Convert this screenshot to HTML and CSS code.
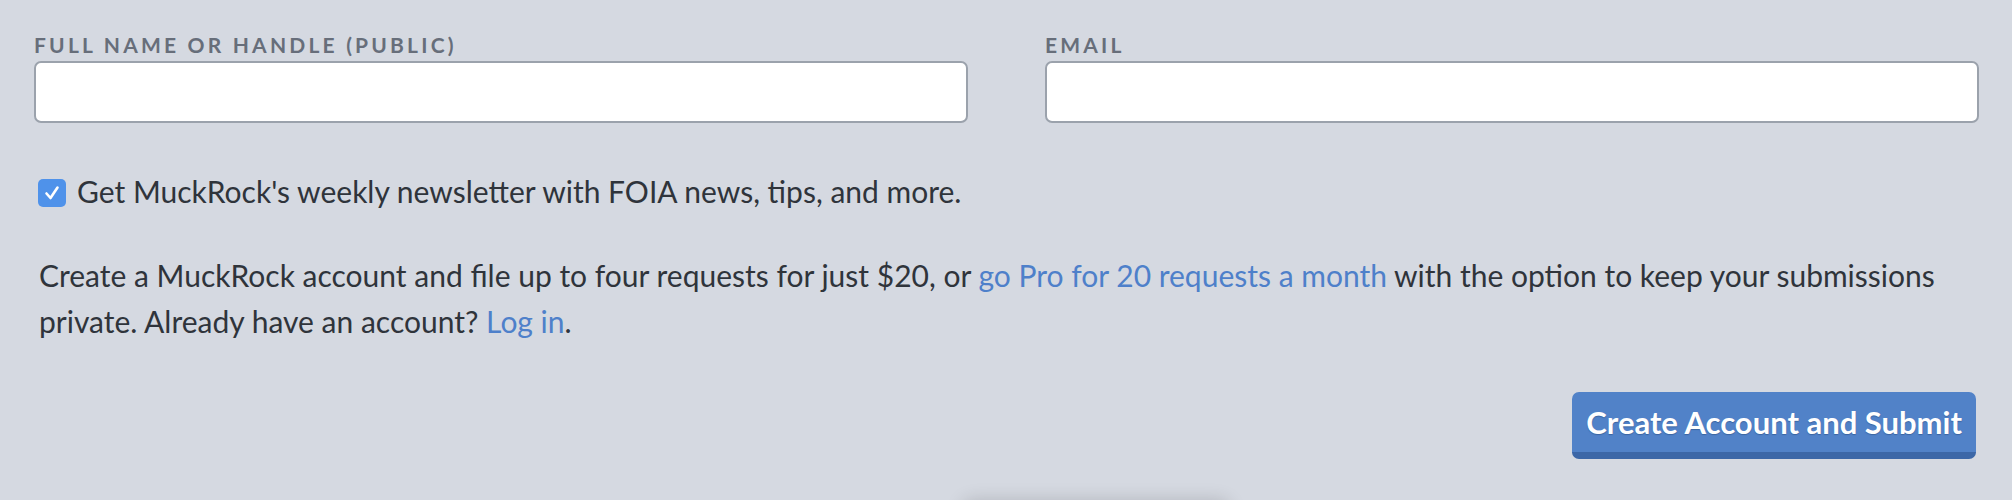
FILE: index.html
```html
<!DOCTYPE html>
<html lang="en">
<head>
  <meta charset="UTF-8">
  <title>Create Account</title>
  <link rel="stylesheet" href="styles.css">
</head>
<body>
  <form class="signup">
    <div class="fields">
      <div class="field">
        <label class="field-label" for="fullName">Full name or handle (public)</label>
        <input class="text-input" id="fullName" type="text">
      </div>
      <div class="field">
        <label class="field-label" for="email">Email</label>
        <input class="text-input" id="email" type="email">
      </div>
    </div>

    <label class="newsletter">
      <span class="check">
        <svg viewBox="0 0 28 28" width="28" height="28">
          <path d="M8.5 14.5 L12.5 19 L19.5 8.5" fill="none" stroke="#fff" stroke-width="2.6" stroke-linecap="round" stroke-linejoin="round"/>
        </svg>
      </span>
      <span>Get MuckRock's weekly newsletter with FOIA news, tips, and more.</span>
    </label>

    <p class="note">
      Create a MuckRock account and file up to four requests for just $20, or <a href="#">go Pro for 20 requests a month</a> with the option to keep your submissions private. Already have an account? <a href="#">Log in</a>.
    </p>

    <div class="actions">
      <button class="submit" type="button">Create Account and Submit</button>
    </div>
  </form>
  <div class="dock"></div>
</body>
</html>
```

FILE: styles.css
```css
html, body {
  margin: 0;
  padding: 0;
  overflow: hidden;
  background: #d5d9e1;
  font-family: Lato, "Liberation Sans", sans-serif;
  color: #2f343b;
}
.signup {
  padding: 32px 33px 0 34px;
}
.fields {
  display: grid;
  grid-template-columns: 1fr 1fr;
  column-gap: 77px;
}
.field {
  display: flex;
  flex-direction: column;
}
.field-label {
  font-size: 21px;
  line-height: 25px;
  font-weight: 700;
  text-transform: uppercase;
  letter-spacing: 3.2px;
  color: #676e7a;
  margin-bottom: 4px;
}
.text-input {
  box-sizing: border-box;
  height: 62px;
  border: 2px solid #9ba2ac;
  border-radius: 7px;
  background: #fff;
  font: inherit;
  font-size: 26px;
  padding: 0 14px;
}
.newsletter {
  display: flex;
  align-items: flex-start;
  gap: 11px;
  margin-top: 48px;
  font-size: 30px;
  line-height: 40px;
  margin-left: 4px;
}
.check {
  display: flex;
  width: 28px;
  height: 28px;
  margin-top: 8px;
  background: #4f92ea;
  border-radius: 5px;
}
.note {
  margin: 41px 0 0 5px;
  font-size: 30px;
  line-height: 46px;
}
.note a {
  color: #4e80ca;
  text-decoration: none;
}
.actions {
  display: flex;
  justify-content: flex-end;
  margin-top: 48px;
  padding-right: 3px;
}
.submit {
  height: 67px;
  padding: 0 14px;
  border: none;
  border-bottom: 7px solid #3c67a7;
  border-radius: 7px;
  background: #5182c8;
  color: #fff;
  font-family: inherit;
  font-size: 31px;
  font-weight: 700;
  text-shadow: 0 1px 1px #3b64a0;
  cursor: pointer;
}
.dock {
  position: fixed;
  left: 962px;
  bottom: -40px;
  width: 268px;
  height: 40px;
  border-radius: 10px;
  background: #d5d9e1;
  box-shadow: 0 0 18px rgba(0, 0, 0, 0.16);
}
```
